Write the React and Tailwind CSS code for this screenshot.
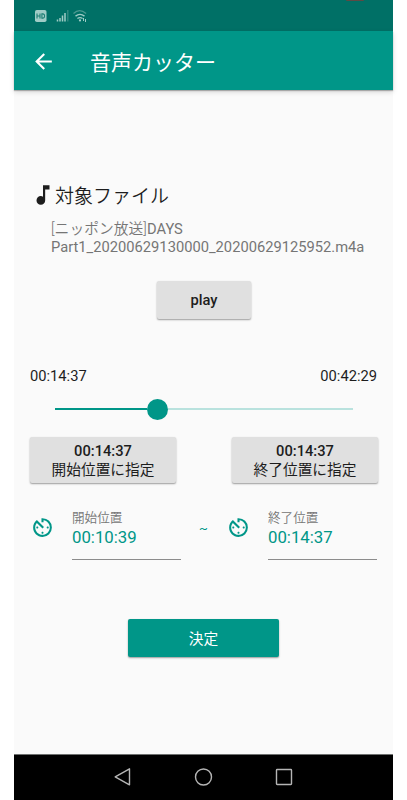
import { MdArrowBack, MdAvTimer, MdMusicNote } from "react-icons/md";

function StatusBar() {
  return (
    <div className="flex h-[31px] shrink-0 items-start bg-[#007066] pl-[21px] pt-[10px] text-[#a0ccc6]">
      <svg width="12" height="12" viewBox="0 0 12 12">
        <rect width="11.5" height="12" rx="1.8" fill="currentColor" />
        <path
          d="M2 3.400v5.200M5 3.400v5.200M2 6h3M6.900 3.900v4.200h1.100q1.600 0 1.600-2.100T8 3.900z"
          fill="none"
          stroke="#1c7d73"
          strokeWidth="1.1"
        />
      </svg>
      <svg className="ml-[9px]" width="13" height="12" viewBox="0 0 13 12">
        <path
          d="M1.500 9.500v2M4 8v3.500M6.500 5.500v6M9 3v8.500"
          stroke="currentColor"
          strokeWidth="1.5"
        />
        <path d="M11.800 0v11.500" stroke="#3d9087" strokeWidth="1.2" />
      </svg>
      <svg className="ml-[4px]" width="15" height="12" viewBox="0 0 15 12" fill="none">
        <path d="M.5 3.400q6-5.400 12.600 0" stroke="#4c9990" strokeWidth="1.3" />
        <path d="M2.500 6.100q4.500-3.400 9 0" stroke="currentColor" strokeWidth="1.4" />
        <path d="M4.400 8.600q2.600-1.900 5.200 0" stroke="currentColor" strokeWidth="1.3" />
        <circle cx="7" cy="10.4" r="1.1" fill="currentColor" />
        <path d="M10.500 8v3M12.500 9v3" stroke="currentColor" strokeWidth="1" />
      </svg>
      <span className="-mt-[10px] ml-[258px] h-px w-[18px] rounded-b bg-[#5d4a44]" />
    </div>
  );
}

function AppBar({ title }) {
  return (
    <header className="z-10 flex h-[59px] shrink-0 items-center bg-[#009688] pl-[17px] text-white shadow-[0_1px_1px_rgba(0,0,0,0.25),0_2px_5px_rgba(0,0,0,0.15)]">
      <MdArrowBack size={25} className="mt-[2px]" />
      <h1 className="ml-[34px] mt-[4px] text-[21px] font-normal leading-[30px]">{title}</h1>
    </header>
  );
}

function RaisedButton({ className, children }) {
  return (
    <button
      type="button"
      className={`flex flex-col items-center justify-center rounded-[2px] text-[14.7px] leading-[19px] shadow-[0_1px_2px_rgba(0,0,0,0.3),0_1px_1px_rgba(0,0,0,0.1)] ${className}`}
    >
      {children}
    </button>
  );
}

function TimeField({ label, value }) {
  return (
    <div className="flex">
      <MdAvTimer size={25} className="mt-[5px] text-[#009688]" />
      <div className="ml-[17px] h-[50px] w-[109px] border-b border-[#8c8c8c]">
        <div className="text-[12.6px] font-[350] leading-[16px] text-[#757575]">{label}</div>
        <div className="mt-px text-[16.8px] leading-[20px] text-[#009688]">{value}</div>
      </div>
    </div>
  );
}

function NavBar() {
  return (
    <nav className="h-[46px] shrink-0 border-t border-[#6e706f] bg-black">
      <svg className="mx-auto mt-[12px]" width="180" height="20" viewBox="0 0 180 20" fill="none" stroke="#b5b5b5" strokeWidth="1.4">
        <path d="M15.500 1.800v16L1.200 9.800z" strokeLinejoin="round" />
        <circle cx="89.5" cy="10" r="8" />
        <rect x="162.500" y="2.500" width="15" height="15" rx=".7" />
      </svg>
    </nav>
  );
}

export default function App() {
  return (
    <div className="h-[800px] w-[407px] overflow-hidden bg-white pl-[14px] font-['Roboto','Noto_Sans_CJK_JP',sans-serif]">
      <div className="flex h-full w-[379px] flex-col bg-[#fafafa] text-[#1d1d1d]">
        <StatusBar />
        <AppBar title="音声カッター" />

        <main className="flex-1">
          <div className="mt-[92px] flex h-[26px] items-center pl-[16px]">
            <MdMusicNote size={26} className="text-[#1d1d1d]" />
            <h2 className="-ml-px mt-[4px] text-[19px] font-[350] leading-[26px]">対象ファイル</h2>
          </div>
          <p className="ml-[37px] mt-[12px] text-[14.7px] leading-[18px] tracking-[0.01px] text-[#757575]">
            <span className="font-[350] tracking-[0.1px]">[ニッポン放送]</span>
            DAYS
            <br />
            Part1_20200629130000_20200629125952.m4a
          </p>

          <RaisedButton className="ml-[143px] mt-[25px] h-[38px] w-[94px] bg-[#e0e0e0] font-medium">play</RaisedButton>

          <div className="mt-[48px] flex justify-between px-[16px] text-[14.7px] leading-[18px]">
            <span>00:14:37</span>
            <span>00:42:29</span>
          </div>

          <div className="ml-[41px] mt-[13px] flex h-[22px] w-[298px] items-center">
            <div className="h-[2px] w-[92px] bg-[#009688]" />
            <div className="size-[21px] rounded-full bg-[#009688]" />
            <div className="h-[2px] flex-1 bg-[#b9e2de]" />
          </div>

          <div className="mt-[17px] flex justify-between pl-[16px] pr-[15px]">
            <RaisedButton className="h-[46px] w-[146px] bg-[#e0e0e0] pt-[2px]">
              <span className="font-medium">00:14:37</span>
              <span>開始位置に指定</span>
            </RaisedButton>
            <RaisedButton className="h-[46px] w-[146px] bg-[#e0e0e0] pt-[2px]">
              <span className="font-medium">00:14:37</span>
              <span>終了位置に指定</span>
            </RaisedButton>
          </div>

          <div className="mt-[27px] flex justify-between px-[16px]">
            <TimeField label="開始位置" value="00:10:39" />
            <span className="mt-[10px] text-[13px] leading-[18px] text-[#009688]">~</span>
            <TimeField label="終了位置" value="00:14:37" />
          </div>

          <RaisedButton className="ml-[114px] mt-[59px] h-[38px] w-[151px] bg-[#009688] pt-[2px] text-white">決定</RaisedButton>
        </main>

        <NavBar />
      </div>
    </div>
  );
}
